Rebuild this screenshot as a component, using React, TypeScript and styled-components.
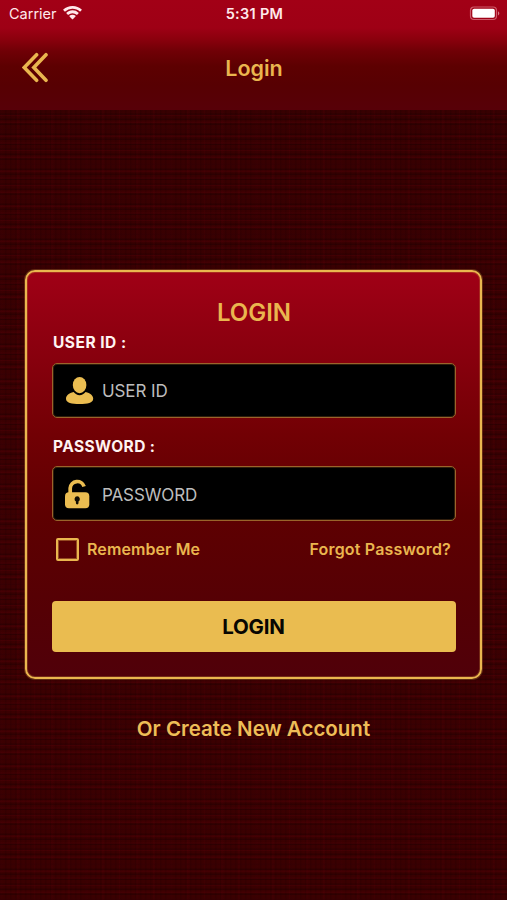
import React from "react";
import styled, { createGlobalStyle } from "styled-components";

const gold = "#eab64f";

const GlobalStyle = createGlobalStyle`
  * { box-sizing: border-box; }
  html, body { margin: 0; background: #300000; }
  body, input, button { font-family: Inter, "Liberation Sans", sans-serif; }
`;

const Screen = styled.main`
  width: 507px;
  height: 900px;
  overflow: hidden;
  display: flex;
  flex-direction: column;
  align-items: center;
  background:
    repeating-linear-gradient(0deg, rgba(0, 0, 0, 0.2) 0 1px, transparent 2px 5px),
    repeating-linear-gradient(0deg, rgba(110, 0, 12, 0.18) 0 1px, transparent 2px 7px),
    repeating-linear-gradient(90deg, rgba(0, 0, 0, 0.1) 0 1px, transparent 2px 5px),
    repeating-linear-gradient(90deg, rgba(110, 0, 12, 0.1) 0 1px, transparent 3px 17px),
    linear-gradient(#360001, #3c0002 60%, #3a0001);
`;

const Header = styled.header`
  width: 100%;
  height: 110px;
  flex: none;
  background: linear-gradient(#a20016 0, #9e0015 28px, #8b000d 39px, #700006 51px, #5d0001 66px, #570002 85px, #570008 110px);
`;

const StatusBar = styled.div`
  height: 27px;
  padding: 0 7px 0 9px;
  display: grid;
  grid-template-columns: 1fr auto 1fr;
  align-items: center;
  color: #ffe9eb;
`;

const Carrier = styled.div`
  display: flex;
  align-items: center;
  gap: 6px;
`;

const Battery = styled.svg`
  justify-self: end;
`;

const TitleBar = styled.div`
  height: 82px;
  padding: 0 21px 0 22px;
  display: grid;
  grid-template-columns: 1fr auto 1fr;
  align-items: center;
`;

const PageTitle = styled.div`
  display: flex;
  padding-top: 2px;
`;

const BackButton = styled.button`
  width: 28px;
  height: 32px;
  padding: 0;
  border: 0;
  background: none;
  color: ${gold};
  svg { display: block; }
`;

const Text = styled.span<{ $size: number; $weight?: number; $color?: string; $spacing?: number }>`
  font-size: ${(p) => p.$size}px;
  font-weight: ${(p) => p.$weight ?? 600};
  color: ${(p) => p.$color ?? "inherit"};
  letter-spacing: ${(p) => p.$spacing ?? 0}px;
  line-height: 1.2;
  white-space: nowrap;
`;

const Card = styled.form`
  width: 457px;
  height: 409px;
  margin-top: 160px;
  flex: none;
  display: flex;
  flex-direction: column;
  padding: 24px 24px 0 25px;
  border: 2px solid ${gold};
  border-radius: 10px;
  box-shadow: 0 0 0 1px rgba(200, 140, 55, 0.3), inset 0 0 0 1px rgba(200, 140, 55, 0.3);
  background: linear-gradient(#a00016 0, #89000e 20%, #720004 40%, #5e0001 60%, #560004 80%, #500009 100%);
`;

const CardTitle = styled.h1`
  height: 34px;
  margin: 0;
  display: flex;
  align-items: center;
  justify-content: center;
  color: ${gold};
`;

const Field = styled.label`
  display: flex;
  flex-direction: column;
  color: #fff3f1;
  & + & { margin-top: 16px; }
  & + & > span:first-child { height: 32px; padding-bottom: 6px; }
`;

const FieldLabel = styled.span`
  height: 33px;
  display: flex;
  align-items: center;
  padding: 0 0 7px 1px;
`;

const InputBox = styled.span`
  height: 55px;
  border: 1px solid #9a642a;
  border-radius: 5px;
  background: #000;
  box-shadow: inset 0 0 0 1px rgba(135, 83, 34, 0.35);
  display: flex;
  align-items: center;
  padding-left: 12px;
  gap: 8px;
  color: #ebbd51;
`;

const Input = styled.input<{ $spacing: number; $drop?: number }>`
  flex: 1;
  min-width: 0;
  padding: ${(p) => p.$drop ?? 0}px 0 0;
  border: 0;
  outline: 0;
  background: transparent;
  color: #c8c8c8;
  font-size: 17px;
  letter-spacing: ${(p) => p.$spacing}px;
  &::placeholder { color: #bdbdbd; opacity: 1; }
`;

const Options = styled.div`
  height: 80px;
  padding: 16px 5px 0 4px;
  display: flex;
  justify-content: space-between;
  align-items: flex-start;
  color: ${gold};
`;

const Remember = styled.label`
  display: flex;
  align-items: center;
  gap: 8px;
  height: 25px;
`;

const Checkbox = styled.input`
  appearance: none;
  width: 23px;
  height: 23px;
  margin: 0;
  border: 2px solid ${gold};
  border-radius: 2px;
  box-shadow: inset 0 0 0 1px rgba(234, 182, 79, 0.4);
`;

const Forgot = styled.a`
  display: flex;
  align-items: center;
  height: 25px;
`;

const SubmitButton = styled.button`
  width: 100%;
  height: 51px;
  flex: none;
  padding: 1px 1px 0 0;
  border: 0;
  border-radius: 4px;
  background: #eabc50;
  color: #080602;
`;

const CreateAccount = styled.a`
  margin-top: 38px;
  color: #eebd57;
`;

const WifiIcon = () => (
  <svg width="19" height="15" viewBox="0 0 19 15" fill="currentColor">
    <path d="M9.5 0C5.9 0 2.7 1.3.3 3.5c-.2.2-.2.4 0 .6L1.6 5.4c.2.2.4.2.6 0A10.8 10.8 0 0 1 9.5 2.8c2.8 0 5.4 1 7.3 2.6.2.2.4.2.6 0l1.3-1.3c.2-.2.2-.4 0-.6A13.5 13.5 0 0 0 9.5 0Z" />
    <path d="M9.5 4.3c-2.4 0-4.5.9-6.1 2.4-.2.2-.2.4 0 .6l1.4 1.5c.2.2.4.2.6 0a6 6 0 0 1 8.2 0c.2.2.4.2.6 0l1.4-1.5c.2-.2.2-.4 0-.6a8.9 8.9 0 0 0-6.1-2.4Z" />
    <path d="M9.5 8.7c-1.2 0-2.2.4-3 1.1-.2.2-.2.4 0 .6l2.7 2.9c.2.2.4.2.6 0l2.7-2.9c.2-.2.2-.4 0-.6a4.5 4.5 0 0 0-3-1.1Z" />
  </svg>
);

const BatteryIcon = () => (
  <Battery width="31" height="15" viewBox="0 0 31 15">
    <rect x="1.5" y="1" width="26" height="12.5" rx="3.5" fill="none" stroke="#dc7887" strokeWidth="1.2" opacity=".75" />
    <rect x="3.3" y="2.8" width="22.5" height="9" rx="1.8" fill="#fff" />
    <path d="M29 5.2c1.8.9 1.8 3.3 0 4.2Z" fill="#d77b88" />
  </Battery>
);

const BackIcon = () => (
  <svg width="28" height="32" viewBox="0 0 28 32" fill="none" stroke="currentColor" strokeWidth="3.6" strokeLinecap="round" strokeLinejoin="miter">
    <path d="M14.6 2.7 2.2 15.5l12.4 12.8M24 2.7 11.8 15.5 24 28.3" />
  </svg>
);

const UserIcon = () => (
  <svg width="29" height="28" viewBox="0 0 29 28" fill="currentColor">
    <path d="M8.6 15C4 15.8 1 18.6 1 21.8c0 4 5.7 5.3 13.6 5.3s13.6-1.3 13.6-5.3c0-3.2-3-6-7.6-6.8-1.6 2-3.6 3.2-6 3.2s-4.4-1.2-6-3.2Z" />
    <ellipse cx="14.6" cy="8.1" rx="6.8" ry="8.1" />
  </svg>
);

const UnlockIcon = () => (
  <svg width="29" height="32" viewBox="0 0 29 32">
    <path d="M5.2 16V10.2a7.1 7.1 0 0 1 13.9-1.6" fill="none" stroke="currentColor" strokeWidth="3.7" />
    <rect x="0" y="14.2" width="24.3" height="16" rx="4" fill="currentColor" />
    <path d="M12.2 18.3a2.8 2.8 0 0 0-1.3 5.2v1.6a1.3 1.3 0 0 0 2.6 0v-1.6a2.8 2.8 0 0 0-1.3-5.2Z" fill="#100c03" />
  </svg>
);

export default function App() {
  return (
    <>
      <GlobalStyle />
      <Screen>
        <Header>
          <StatusBar>
            <Carrier>
              <Text $size={14.5} $weight={400}>Carrier</Text>
              <WifiIcon />
            </Carrier>
            <Text $size={14.5} $spacing={0.3}>5:31 PM</Text>
            <BatteryIcon />
          </StatusBar>
          <TitleBar>
            <BackButton aria-label="Back"><BackIcon /></BackButton>
            <PageTitle><Text $size={21.5} $color={gold}>Login</Text></PageTitle>
          </TitleBar>
        </Header>
        <Card onSubmit={(e) => e.preventDefault()}>
          <CardTitle><Text $size={24}>LOGIN</Text></CardTitle>
          <Field>
            <FieldLabel><Text $size={15.5} $weight={700} $spacing={0.5}>USER ID :</Text></FieldLabel>
            <InputBox>
              <UserIcon />
              <Input $spacing={-0.1} placeholder="USER ID" />
            </InputBox>
          </Field>
          <Field>
            <FieldLabel><Text $size={15.5} $weight={700} $spacing={0.42}>PASSWORD :</Text></FieldLabel>
            <InputBox>
              <UnlockIcon />
              <Input $spacing={-0.12} $drop={2} type="password" placeholder="PASSWORD" />
            </InputBox>
          </Field>
          <Options>
            <Remember>
              <Checkbox type="checkbox" />
              <Text $size={16} $spacing={0.1}>Remember Me</Text>
            </Remember>
            <Forgot><Text $size={16} $spacing={0.18}>Forgot Password?</Text></Forgot>
          </Options>
          <SubmitButton type="submit"><Text $size={20.5} $weight={700} $spacing={-0.2}>LOGIN</Text></SubmitButton>
        </Card>
        <CreateAccount><Text $size={20.5}>Or Create New Account</Text></CreateAccount>
      </Screen>
    </>
  );
}
